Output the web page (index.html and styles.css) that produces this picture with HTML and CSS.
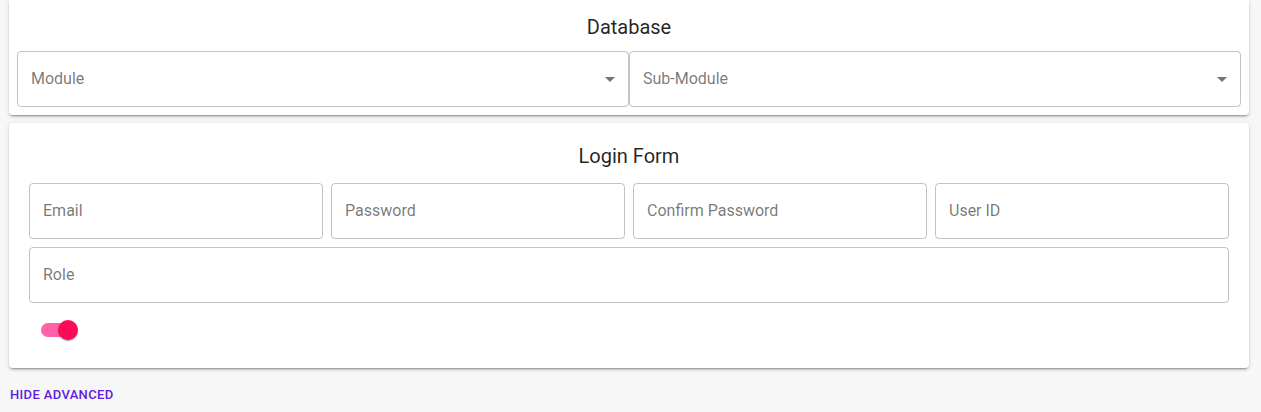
FILE: index.html
```html
<!DOCTYPE html>
<html lang="en">
<head>
<meta charset="utf-8">
<title>Forms</title>
<link rel="stylesheet" href="styles.css">
</head>
<body>
<div class="page">
  <section class="card card-db">
    <h2 class="card-title">Database</h2>
    <div class="select-row">
      <div class="field select">
        <span class="label">Module</span>
        <svg class="arrow" viewBox="0 0 24 24" width="24" height="24"><path d="M7 10l5 5 5-5z"/></svg>
      </div>
      <div class="field select">
        <span class="label">Sub-Module</span>
        <svg class="arrow" viewBox="0 0 24 24" width="24" height="24"><path d="M7 10l5 5 5-5z"/></svg>
      </div>
    </div>
  </section>

  <section class="card card-login">
    <h2 class="card-title">Login Form</h2>
    <div class="grid">
      <div class="field"><span class="label">Email</span></div>
      <div class="field"><span class="label">Password</span></div>
      <div class="field"><span class="label">Confirm Password</span></div>
      <div class="field"><span class="label">User ID</span></div>
      <div class="field wide"><span class="label">Role</span></div>
    </div>
    <div class="switch-row">
      <span class="switch">
        <span class="track"></span>
        <span class="thumb"></span>
      </span>
    </div>
  </section>

  <div class="adv">HIDE ADVANCED</div>
</div>
</body>
</html>
```
FILE: styles.css
```css
* { box-sizing: border-box; }
html, body {
  margin: 0;
  padding: 0;
  background: #f7f7f7;
  font-family: Roboto, "Liberation Sans", Arial, sans-serif;
  height: 100%;
}
.page {
  padding: 0 12px 0 9px;
}
.card {
  background: #fff;
  border-radius: 4px;
  box-shadow: 0px 3px 1px -2px rgba(0,0,0,0.2), 0px 2px 2px 0px rgba(0,0,0,0.14), 0px 1px 5px 0px rgba(0,0,0,0.12);
}
.card-db {
  padding: 11px 8px 8px;
  border-top-left-radius: 0;
  border-top-right-radius: 0;
}
.card-login {
  margin-top: 8px;
  padding: 17px 20px 19px;
}
.card-title {
  margin: 0;
  font-size: 20px;
  font-weight: 400;
  line-height: 32px;
  text-align: center;
  color: rgba(0,0,0,0.87);
}
.card-db .card-title { margin-bottom: 8px; }
.card-login .card-title { margin-bottom: 11px; }

.select-row {
  display: grid;
  grid-template-columns: 1fr 1fr;
}
.field {
  position: relative;
  height: 56px;
  border: 1px solid rgba(0,0,0,0.23);
  border-radius: 4px;
  display: flex;
  align-items: center;
  padding-left: 13px;
  padding-bottom: 2px;
}
.label {
  font-size: 16px;
  color: rgba(0,0,0,0.54);
  line-height: 19px;
}
.arrow {
  position: absolute;
  right: 6px;
  top: 15px;
  fill: rgba(0,0,0,0.54);
}
.grid {
  display: grid;
  grid-template-columns: repeat(4, 1fr);
  gap: 8px;
}
.wide { grid-column: 1 / -1; }

.switch-row {
  margin-top: 8px;
  height: 38px;
  display: flex;
  align-items: center;
}
.switch {
  position: relative;
  width: 58px;
  height: 38px;
  display: block;
}
.track {
  position: absolute;
  left: 12px;
  top: 12px;
  width: 34px;
  height: 14px;
  border-radius: 7px;
  background: #ff62a8;
}
.thumb {
  position: absolute;
  left: 29px;
  top: 9px;
  width: 20px;
  height: 20px;
  border-radius: 50%;
  background: #ff0a57;
  box-shadow: 0px 2px 1px -1px rgba(0,0,0,0.2), 0px 1px 1px 0px rgba(0,0,0,0.14), 0px 1px 3px 0px rgba(0,0,0,0.12);
}
.adv {
  margin-top: 19px;
  padding-left: 1px;
  font-size: 13px;
  font-weight: 500;
  line-height: 16px;
  letter-spacing: 0.35px;
  color: #5e1de0;
}
```
